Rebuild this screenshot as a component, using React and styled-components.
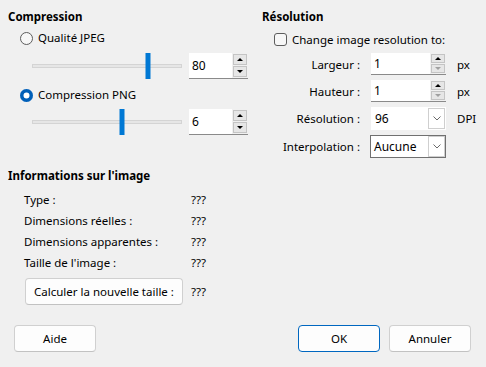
import React from "react";
import styled, { createGlobalStyle } from "styled-components";

const GlobalStyle = createGlobalStyle`
    html, body {
        margin: 0;
        padding: 0;
        background: #f0f0f0;
    }
    * {
        box-sizing: border-box;
    }
`;

const Dialog = styled.div`
    width: 486px;
    height: 367px;
    background: #f0f0f0;
    font-family: "Noto Sans", "Open Sans", sans-serif;
    font-size: 11.5px;
    color: #000;
    padding: 9px 15px 0 8px;
    display: flex;
    flex-direction: column;
`;

const Top = styled.div`
    display: grid;
    grid-template-columns: 254px 1fr;
`;

const Column = styled.div`
    display: flex;
    flex-direction: column;
`;

const GroupTitle = styled.div`
    font-weight: 700;
    line-height: 16px;
    height: 16px;
`;

const RadioRow = styled.label`
    display: flex;
    align-items: center;
    gap: 5px;
    height: 16px;
    margin: ${p => p.$mt}px 0 0 12px;
    line-height: 16px;
`;

const RadioMark = styled.span`
    width: 13px;
    height: 13px;
    border-radius: 50%;
    flex: none;
    ${p => p.$checked
        ? `background: #005fb8; border: none; box-shadow: inset 0 0 0 3.5px #005fb8, inset 0 0 0 7px #fff;`
        : `background: #f7f7f7; border: 1px solid #5d5d5d;`}
`;

const SliderRow = styled.div`
    display: flex;
    align-items: center;
    height: 26px;
    margin: ${p => p.$mt}px 0 0 24px;
`;

const Track = styled.div`
    position: relative;
    width: 150px;
    height: 4px;
    background: #e6e6e6;
    border: 1px solid #d4d4d4;
    margin-right: 7px;
`;

const Thumb = styled.div`
    position: absolute;
    top: -12px;
    width: 5px;
    height: 26px;
    background: #0078d4;
    transform: translateX(-50%);
`;

const SpinBox = styled.div`
    display: flex;
    width: ${p => p.$w}px;
    height: ${p => p.$h}px;
    background: #fff;
    border-bottom: 1px solid #8a8a8a;
`;

const SpinValue = styled.div`
    flex: 1;
    display: flex;
    align-items: center;
    padding-left: 3px;
    font-size: 12px;
`;

const SpinButtons = styled.div`
    display: flex;
    flex-direction: column;
    justify-content: center;
    gap: 1px;
    width: 16px;
    padding: 1px;
    background: #f0f0f0;
`;

const SpinButton = styled.div`
    flex: 1;
    max-height: 12px;
    background: #e6e6e6;
    border: 1px solid #c4c4c4;
    display: flex;
    align-items: center;
    justify-content: center;
`;

const Arrow = styled.span`
    width: 0;
    height: 0;
    border-left: 3px solid transparent;
    border-right: 3px solid transparent;
    ${p => p.$down
        ? `border-top: 3px solid ${p.$dim ? "#a0a0a0" : "#000"};`
        : `border-bottom: 3px solid #000;`}
`;

const CheckRow = styled.label`
    display: flex;
    align-items: center;
    gap: 5px;
    height: 16px;
    margin: 6px 0 0 12px;
`;

const CheckMark = styled.span`
    width: 13px;
    height: 13px;
    border: 1px solid #5d5d5d;
    border-radius: 3px;
    background: #f7f7f7;
    flex: none;
`;

const FormGrid = styled.div`
    display: grid;
    grid-template-columns: 98px 75px auto;
    grid-template-rows: 22px 22px 23px 23px;
    column-gap: 11px;
    row-gap: 5px;
    align-items: center;
    margin-top: 6px;
`;

const FieldLabel = styled.div`
    text-align: right;
`;

const Unit = styled.div`
    padding-left: ${p => p.$pl || 0}px;
`;

const Combo = styled.div`
    display: flex;
    height: 23px;
    background: #fff;
    border: 1px solid ${p => p.$focus ? "#707070" : "#fff"};
    margin-left: ${p => p.$ml || 0}px;
`;

const ComboValue = styled.div`
    flex: 1;
    display: flex;
    align-items: center;
    padding-left: 3px;
    font-size: 12px;
`;

const ComboButton = styled.div`
    width: 17px;
    border: 1px solid #cfcfcf;
    display: flex;
    align-items: center;
    justify-content: center;
    background: #fff;
`;

const InfoSection = styled.div`
    margin-top: 10px;
    display: flex;
    flex-direction: column;
`;

const InfoRow = styled.div`
    display: grid;
    grid-template-columns: 167px auto;
    align-items: center;
    height: 16px;
    margin: ${p => p.$mt}px 0 0 16px;
`;

const Button = styled.div`
    display: flex;
    align-items: center;
    justify-content: center;
    height: 27px;
    width: ${p => p.$w || 82}px;
    background: #fdfdfd;
    border: 1px solid ${p => p.$primary ? "#0067c0" : "#d0d0d0"};
    border-bottom-color: ${p => p.$primary ? "#0067c0" : "#c2c2c2"};
    border-radius: 4px;
`;

const CalcRow = styled.div`
    display: flex;
    align-items: center;
    margin: 8px 0 0 17px;
    gap: 8px;
`;

const Footer = styled.div`
    display: flex;
    align-items: center;
    margin-top: 20px;
    padding-left: 6px;
    gap: 9px;
`;

const Spacer = styled.div`
    flex: 1;
`;

function Slider({ pos }) {
    return (
        <Track>
            <Thumb style={{ left: `${pos}%` }} />
        </Track>
    );
}

function Spin({ value, w, h, dim }) {
    return (
        <SpinBox $w={w} $h={h}>
            <SpinValue>{value}</SpinValue>
            <SpinButtons>
                <SpinButton><Arrow /></SpinButton>
                <SpinButton><Arrow $down $dim={dim} /></SpinButton>
            </SpinButtons>
        </SpinBox>
    );
}

function Chevron() {
    return (
        <svg width="8" height="5" viewBox="0 0 8 5">
            <path d="M0.5 0.5 L4 4 L7.5 0.5" fill="none" stroke="#6a6a6a" strokeWidth="1" />
        </svg>
    );
}

export default function App() {
    return (
        <>
            <GlobalStyle />
            <Dialog>
                <Top>
                    <Column>
                        <GroupTitle>Compression</GroupTitle>
                        <RadioRow $mt={5}><RadioMark />Qualité JPEG</RadioRow>
                        <SliderRow $mt={7}>
                            <Slider pos={77.5} />
                            <Spin value="80" w={59} h={26} />
                        </SliderRow>
                        <RadioRow $mt={8}><RadioMark $checked />Compression PNG</RadioRow>
                        <SliderRow $mt={6}>
                            <Slider pos={60} />
                            <Spin value="6" w={59} h={26} />
                        </SliderRow>
                    </Column>
                    <Column>
                        <GroupTitle>Résolution</GroupTitle>
                        <CheckRow><CheckMark />Change image resolution to:</CheckRow>
                        <FormGrid>
                            <FieldLabel>Largeur :</FieldLabel>
                            <Spin value="1" w={75} h={22} dim />
                            <Unit>px</Unit>
                            <FieldLabel>Hauteur :</FieldLabel>
                            <Spin value="1" w={75} h={22} dim />
                            <Unit>px</Unit>
                            <FieldLabel>Résolution :</FieldLabel>
                            <Combo>
                                <ComboValue>96</ComboValue>
                                <ComboButton><Chevron /></ComboButton>
                            </Combo>
                            <Unit>DPI</Unit>
                            <FieldLabel>Interpolation :</FieldLabel>
                            <Combo $focus $ml={-1}>
                                <ComboValue>Aucune</ComboValue>
                                <ComboButton><Chevron /></ComboButton>
                            </Combo>
                            <Unit />
                        </FormGrid>
                    </Column>
                </Top>
                <InfoSection>
                    <GroupTitle>Informations sur l'image</GroupTitle>
                    <InfoRow $mt={7}><span>Type :</span><span>???</span></InfoRow>
                    <InfoRow $mt={5}><span>Dimensions réelles :</span><span>???</span></InfoRow>
                    <InfoRow $mt={5}><span>Dimensions apparentes :</span><span>???</span></InfoRow>
                    <InfoRow $mt={5}><span>Taille de l'image :</span><span>???</span></InfoRow>
                    <CalcRow>
                        <Button $w={158}>Calculer la nouvelle taille :</Button>
                        <span>???</span>
                    </CalcRow>
                </InfoSection>
                <Footer>
                    <Button>Aide</Button>
                    <Spacer />
                    <Button $primary>OK</Button>
                    <Button>Annuler</Button>
                </Footer>
            </Dialog>
        </>
    );
}
